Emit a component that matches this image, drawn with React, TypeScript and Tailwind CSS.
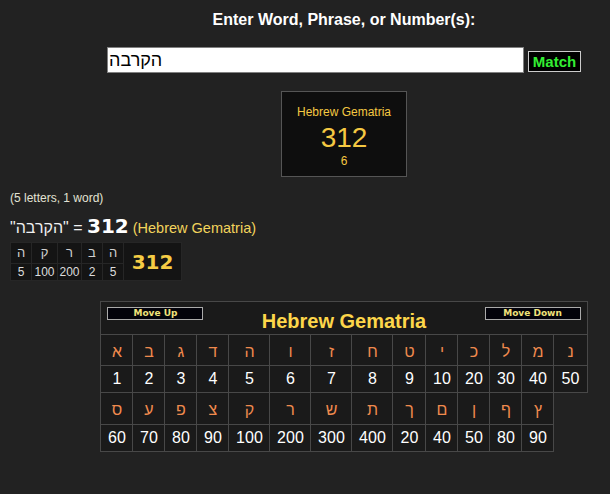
import React from 'react';

const row1 = [
  ['א', 1], ['ב', 2], ['ג', 3], ['ד', 4], ['ה', 5], ['ו', 6], ['ז', 7],
  ['ח', 8], ['ט', 9], ['י', 10], ['כ', 20], ['ל', 30], ['מ', 40], ['נ', 50],
];

const row2 = [
  ['ס', 60], ['ע', 70], ['פ', 80], ['צ', 90], ['ק', 100], ['ר', 200], ['ש', 300],
  ['ת', 400], ['ך', 20], ['ם', 40], ['ן', 50], ['ף', 80], ['ץ', 90],
];

const colWidths = [32, 32, 32, 32, 41, 41, 41, 41, 33, 32, 32, 32, 32, 33];

const breakdown = [
  ['ה', 5, 'w-[21px]'],
  ['ק', 100, 'w-[26px]'],
  ['ר', 200, 'w-[24px]'],
  ['ב', 2, 'w-[21px]'],
  ['ה', 5, 'w-[21px]'],
];

const cell = 'border border-[#484848] bg-[#1a1a1a] text-center p-0';

const App: React.FC = () => {
  return (
    <div className="w-[610px] h-[494px] overflow-hidden bg-[#222222] font-['Liberation_Sans',Arial,sans-serif]">
      <div className="w-[688px] px-[10px] pt-[10px]">
        <div className="text-center text-white font-bold text-[16px] leading-[19px]">
          Enter Word, Phrase, or Number(s):
        </div>

        <div className="flex justify-center items-start gap-[4px] mt-[18px]">
          <input
            className="w-[417px] h-[26px] bg-white border border-[#808080] pl-[1px] text-[18px] text-black outline-none"
            defaultValue="הקרבה"
          />
          <button className="mt-[4px] w-[53px] h-[21px] bg-black border border-[#cccccc] text-[#33ee33] font-bold text-[15px] leading-[19px]">
            Match
          </button>
        </div>

        <div className="mx-auto mt-[18px] w-[126px] h-[86px] border border-[#555555] bg-[#0e0e0e] flex flex-col items-center text-[#f5c842]">
          <div className="mt-[13px] text-[12px] leading-[14px]">Hebrew Gematria</div>
          <div className="mt-[3px] text-[28px] leading-[32px]">312</div>
          <div className="text-[12px] leading-[14px]">6</div>
        </div>

        <div className="mt-[14px] text-[12px] leading-[15px] text-[#e2e2d4]">(5 letters, 1 word)</div>

        <div className="mt-[8px] flex items-baseline leading-[24px] whitespace-pre">
          <span className="text-[16px] text-[#f0f0f0]">"הקרבה" = </span>
          <span className="font-['DejaVu_Sans',sans-serif] font-bold text-[20px] text-white">312</span>
          <span className="text-[14.5px] text-[#f2d45c]"> (Hebrew Gematria)</span>
        </div>

        <table className="mt-[2px] border-collapse">
          <tbody>
            <tr className="h-[21px]">
              {breakdown.map(([l, , w], i) => (
                <td key={i} className={`${w} border border-[#262626] bg-[#141414] text-center text-[13px] leading-[14px] text-[#d0d0d0] p-0`}>
                  {l}
                </td>
              ))}
              <td rowSpan={2} className="w-[58px] border border-[#262626] bg-[#141414] text-center p-0 font-['DejaVu_Sans',sans-serif] font-bold text-[20px] text-[#f5cc45]">
                312
              </td>
            </tr>
            <tr className="h-[17px]">
              {breakdown.map(([, v, w], i) => (
                <td key={i} className={`${w} border border-[#262626] bg-[#141414] text-center text-[12px] leading-[14px] text-[#dddddd] p-0`}>
                  {v}
                </td>
              ))}
            </tr>
          </tbody>
        </table>

        <table className="mx-auto mt-[20px] border-collapse table-fixed w-[486px]">
          <colgroup>
            {colWidths.map((w, i) => (
              <col key={i} style={{ width: w }} />
            ))}
          </colgroup>
          <tbody>
            <tr>
              <td colSpan={14} className="border border-[#484848] bg-[#1a1a1a] h-[33px] p-0">
                <div className="flex justify-between items-start px-[6px] pt-[5px] h-[32px]">
                  <button className="w-[96px] h-[13px] bg-[#02020a] border border-[#aaaaaa] font-['DejaVu_Sans',sans-serif] font-bold text-[9px] leading-[11px] text-[#f0e27a]">
                    Move Up
                  </button>
                  <div className="self-center text-[20px] font-bold text-[#fdd64a] leading-[24px]">Hebrew Gematria</div>
                  <button className="w-[96px] h-[13px] bg-[#02020a] border border-[#aaaaaa] font-['DejaVu_Sans',sans-serif] font-bold text-[9px] leading-[11px] text-[#f0e27a]">
                    Move Down
                  </button>
                </div>
              </td>
            </tr>
            <tr className="h-[31px]">
              {row1.map(([l], i) => (
                <td key={i} className={`${cell} text-[16px] text-[#f08a4e] pt-[3px]`}>{l}</td>
              ))}
            </tr>
            <tr className="h-[27px]">
              {row1.map(([, v], i) => (
                <td key={i} className={`${cell} text-[16px] text-white`}>{v}</td>
              ))}
            </tr>
            <tr className="h-[32px]">
              {row2.map(([l], i) => (
                <td key={i} className={`${cell} text-[16px] text-[#f08a4e] pt-[3px]`}>{l}</td>
              ))}
            </tr>
            <tr className="h-[27px]">
              {row2.map(([, v], i) => (
                <td key={i} className={`${cell} text-[16px] text-white`}>{v}</td>
              ))}
            </tr>
          </tbody>
        </table>
      </div>
    </div>
  );
};

export default App;
